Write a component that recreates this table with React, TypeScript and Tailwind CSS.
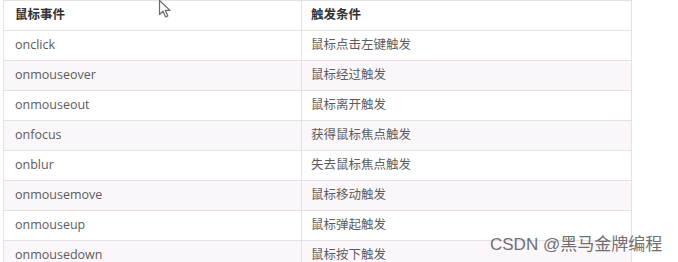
const rows: [string, string][] = [
  ["onclick", "鼠标点击左键触发"],
  ["onmouseover", "鼠标经过触发"],
  ["onmouseout", "鼠标离开触发"],
  ["onfocus", "获得鼠标焦点触发"],
  ["onblur", "失去鼠标焦点触发"],
  ["onmousemove", "鼠标移动触发"],
  ["onmouseup", "鼠标弹起触发"],
  ["onmousedown", "鼠标按下触发"],
];

const font = {
  fontFamily: '"Open Sans", "Noto Sans CJK SC", sans-serif',
};

function Cursor() {
  return (
    <svg
      className="absolute left-[158px] top-[-1px]"
      width="14"
      height="20"
      viewBox="0 0 14 20"
    >
      <path
        d="M1.5 1.5 L1.5 15.5 L5 12.2 L7.6 18 L9.8 17 L7.3 11.4 L12 11.4 Z"
        fill="#fff"
        stroke="#6b6b6b"
        strokeWidth="1.2"
        strokeLinejoin="round"
      />
    </svg>
  );
}

export default function App() {
  return (
    <div
      className="relative w-[678px] h-[262px] overflow-hidden bg-white"
      style={font}
    >
      <div className="ml-[3px] w-[629px] border-x border-t border-[#e6e0e8]">
        <div className="grid grid-cols-[298px_1fr] h-[30px] border-b border-[#e6e0e8] text-[12.5px] font-bold text-[#333]">
          <div className="flex items-center pl-[11px] border-r border-[#e6e0e8]">
            鼠标事件
          </div>
          <div className="flex items-center pl-[9px]">触发条件</div>
        </div>
        {rows.map(([ev, cond], i) => (
          <div
            key={ev}
            className={
              "grid grid-cols-[298px_1fr] h-[30px] border-b border-[#e6e0e8] text-[12.5px] text-[#5c5c5c] " +
              (i % 2 === 1 ? "bg-[#faf6fa]" : "bg-white")
            }
          >
            <div className="flex items-center pl-[11px] border-r border-[#e6e0e8]">
              {ev}
            </div>
            <div className="flex items-center pl-[9px]">{cond}</div>
          </div>
        ))}
      </div>
      <Cursor />
      <div
        className="absolute left-[490px] top-[233px] text-[17px] leading-[24px] text-[#707070] whitespace-nowrap"
        style={{ fontFamily: '"Liberation Sans", "Noto Sans CJK SC", sans-serif' }}
      >
        CSDN @黑马金牌编程
      </div>
    </div>
  );
}
